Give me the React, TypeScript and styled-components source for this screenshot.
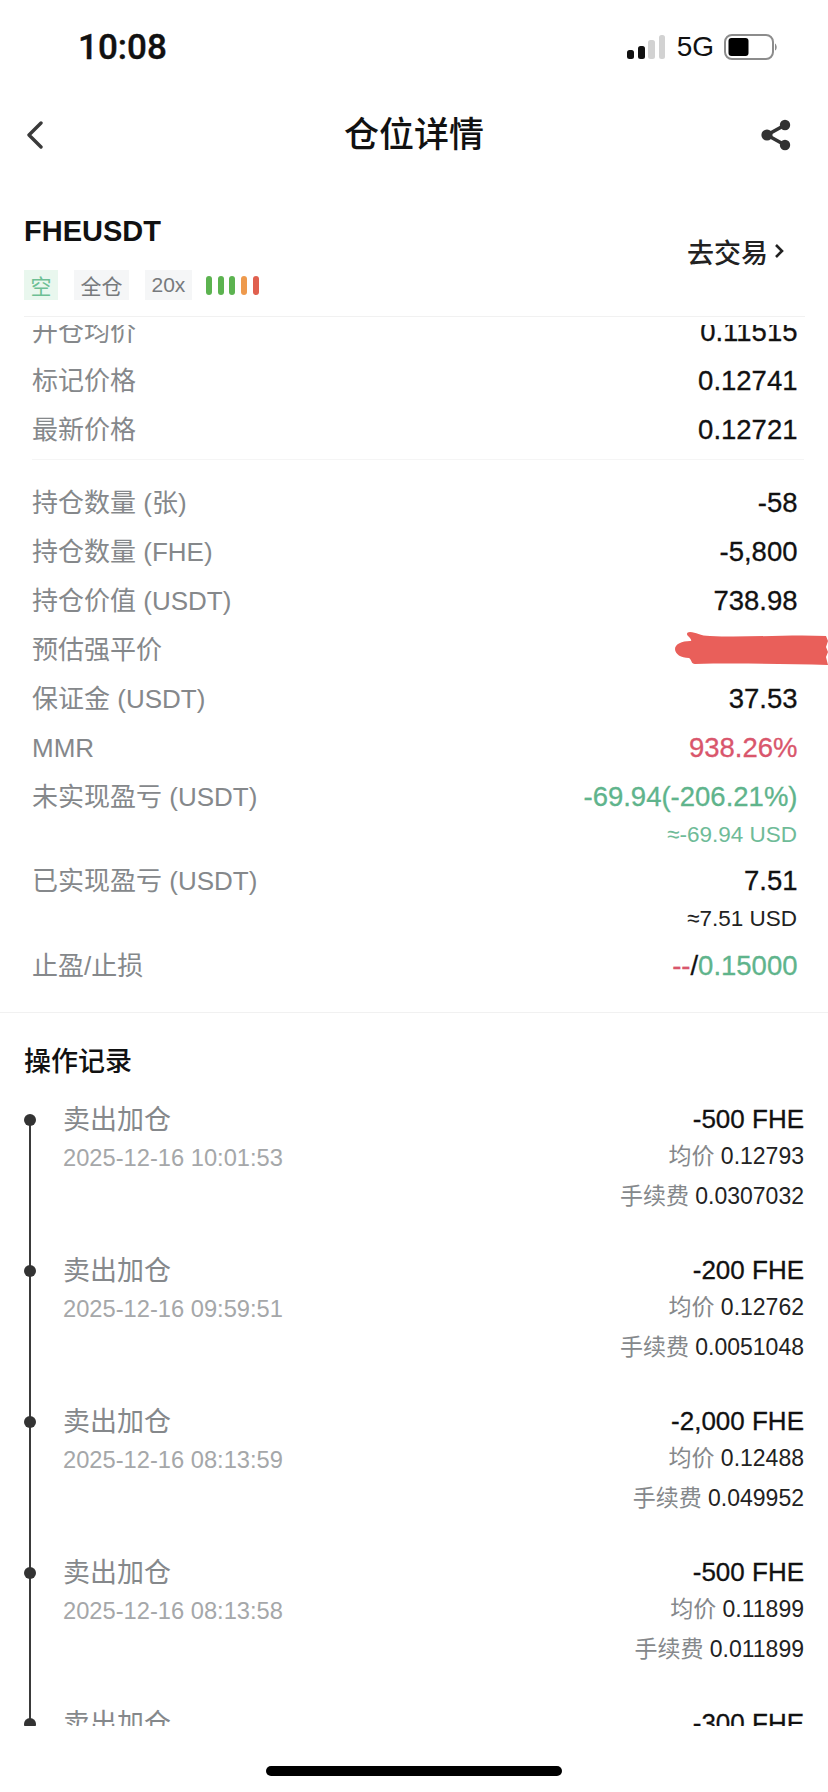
import styled, { createGlobalStyle } from 'styled-components';

const FONT = '"Liberation Sans", "Noto Sans CJK SC", sans-serif';

const GlobalStyle = createGlobalStyle`
    html, body {
        margin: 0;
        padding: 0;
        background: #fff;
    }
    * {
        box-sizing: border-box;
    }
`;

const priceRows = [
    { label: '开仓均价', value: '0.11515' },
    { label: '标记价格', value: '0.12741' },
    { label: '最新价格', value: '0.12721' },
];

const records = [
    { amount: '-500 FHE', time: '2025-12-16 10:01:53', price: '0.12793', fee: '0.0307032' },
    { amount: '-200 FHE', time: '2025-12-16 09:59:51', price: '0.12762', fee: '0.0051048' },
    { amount: '-2,000 FHE', time: '2025-12-16 08:13:59', price: '0.12488', fee: '0.049952' },
    { amount: '-500 FHE', time: '2025-12-16 08:13:58', price: '0.11899', fee: '0.011899' },
    { amount: '-300 FHE', time: '2025-12-16 08:13:58', price: '0.11899', fee: '0.007139' },
];

const riskColors = ['#5cb350', '#5cb350', '#5cb350', '#ee9a4d', '#e0604f'];

export default function App() {
    return (
        <Page>
            <GlobalStyle />
            <StatusBar>
                <Clock>10:08</Clock>
                <StatusIcons>
                    <svg width="38" height="24" viewBox="0 0 38 24">
                        <rect x="0" y="15" width="7" height="9" rx="2.5" fill="#111" />
                        <rect x="11" y="11" width="7" height="13" rx="2.5" fill="#111" />
                        <rect x="21" y="5" width="7" height="19" rx="2.5" fill="#d2d2d2" />
                        <rect x="32" y="0" width="6" height="24" rx="2.5" fill="#d2d2d2" />
                    </svg>
                    <Network>5G</Network>
                    <svg width="54" height="26" viewBox="0 0 54 26">
                        <rect x="1" y="1" width="48" height="24" rx="7" fill="none" stroke="#8c8c8c" strokeWidth="2" />
                        <rect x="4.5" y="4" width="20" height="18" rx="3" fill="#000" />
                        <path d="M51 9.5c2 1 2.5 6 0 7z" fill="#8c8c8c" />
                    </svg>
                </StatusIcons>
            </StatusBar>

            <NavBar>
                <svg width="18" height="28" viewBox="0 0 18 28">
                    <path d="M15 2 3 14l12 12" fill="none" stroke="#3a3a3a" strokeWidth="3.4" strokeLinecap="round" strokeLinejoin="round" />
                </svg>
                <NavTitle>仓位详情</NavTitle>
                <ShareIcon width="32" height="32" viewBox="0 0 32 32">
                    <path d="M25 6 7 16l18 10" fill="none" stroke="#333" strokeWidth="3.6" />
                    <circle cx="25" cy="6" r="5.2" fill="#333" />
                    <circle cx="7" cy="16" r="5.6" fill="#333" />
                    <circle cx="25" cy="26" r="5.2" fill="#333" />
                </ShareIcon>
            </NavBar>

            <SymbolHeader>
                <div>
                    <Symbol>FHEUSDT</Symbol>
                    <TagRow>
                        <Tag $green>空</Tag>
                        <Tag>全仓</Tag>
                        <Tag>20x</Tag>
                        <RiskBars>
                            {riskColors.map((c, i) => <RiskBar key={i} $color={c} />)}
                        </RiskBars>
                    </TagRow>
                </div>
                <TradeLink>
                    去交易
                    <svg width="11" height="18" viewBox="0 0 11 18">
                        <path d="M3 3l6 6-6 6" fill="none" stroke="#222" strokeWidth="2.6" />
                    </svg>
                </TradeLink>
            </SymbolHeader>

            <DetailClip>
                <PriceGroup>
                    {priceRows.map((r) => (
                        <Row key={r.label}>
                            <Label>{r.label}</Label>
                            <Value>{r.value}</Value>
                        </Row>
                    ))}
                </PriceGroup>

                <PositionGroup>
                    <Row><Label>持仓数量 (张)</Label><Value>-58</Value></Row>
                    <Row><Label>持仓数量 (FHE)</Label><Value>-5,800</Value></Row>
                    <Row><Label>持仓价值 (USDT)</Label><Value>738.98</Value></Row>
                    <Row>
                        <Label>预估强平价</Label>
                        <Scribble width="153" height="36" viewBox="0 0 153 36">
                            <path d="M15 1c6 0 10 4 20 4C70 7 115 3 151 5l2 5-2 6 2 5-2 5 2 8C110 33 60 32 20 33c-4 0-3-4-6-6C6 27 0 23 0 18s7-8 15-8c3 0 0-3-2-5S12 1 15 1z" fill="#e95f5a" />
                        </Scribble>
                    </Row>
                    <Row><Label>保证金 (USDT)</Label><Value>37.53</Value></Row>
                    <Row><Label>MMR</Label><Value $color="#d9566c">938.26%</Value></Row>
                    <Row><Label>未实现盈亏 (USDT)</Label><Value $color="#5fb48c">-69.94(-206.21%)</Value></Row>
                    <SubValue $color="#6fbb98">≈-69.94 USD</SubValue>
                    <Row><Label>已实现盈亏 (USDT)</Label><Value>7.51</Value></Row>
                    <SubValue $color="#222" $tall>≈7.51 USD</SubValue>
                    <Row>
                        <Label>止盈/止损</Label>
                        <Value><Colored $color="#d9566c">--</Colored>/<Colored $color="#5fb48c">0.15000</Colored></Value>
                    </Row>
                </PositionGroup>
            </DetailClip>

            <Records>
                <SectionTitle>操作记录</SectionTitle>
                <Timeline>
                    {records.map((r, i) => (
                        <TimelineItem key={i}>
                            <div>
                                <RecordTitle>卖出加仓</RecordTitle>
                                <RecordTime>{r.time}</RecordTime>
                            </div>
                            <RecordRight>
                                <Amount>{r.amount}</Amount>
                                <RecordMeta><MetaLabel>均价</MetaLabel> {r.price}</RecordMeta>
                                <RecordMeta><MetaLabel>手续费</MetaLabel> {r.fee}</RecordMeta>
                            </RecordRight>
                        </TimelineItem>
                    ))}
                </Timeline>
            </Records>

            <HomeBar />
        </Page>
    );
}

const Page = styled.div`
    width: 828px;
    height: 1792px;
    display: flex;
    flex-direction: column;
    overflow: hidden;
    background: #fff;
    color: #111;
    font-family: ${FONT};
`;

const StatusBar = styled.div`
    height: 94px;
    flex: none;
    display: flex;
    align-items: center;
    justify-content: space-between;
    padding: 0 50px 0 78px;
`;

const Clock = styled.div`
    font-family: Roboto, sans-serif;
    font-size: 35px;
    font-weight: 500;
    -webkit-text-stroke: 0.4px currentColor;
`;

const StatusIcons = styled.div`
    display: flex;
    align-items: center;
`;

const Network = styled.div`
    font-size: 28px;
    margin: 0 10px 0 12px;
`;

const NavBar = styled.div`
    height: 82px;
    flex: none;
    display: grid;
    grid-template-columns: 1fr auto 1fr;
    align-items: center;
    padding: 0 26px;
`;

const NavTitle = styled.div`
    font-size: 35px;
    line-height: 40px;
    font-weight: 500;
    color: #111;
`;

const ShareIcon = styled.svg`
    justify-self: end;
    margin-right: 10px;
`;

const SymbolHeader = styled.div`
    height: 141px;
    flex: none;
    margin: 0 23px 0 24px;
    padding-top: 37px;
    display: flex;
    justify-content: space-between;
    border-bottom: 1px solid #f1f1f1;
`;

const Symbol = styled.div`
    font-size: 29px;
    line-height: 36px;
    font-weight: 700;
`;

const TagRow = styled.div`
    display: flex;
    align-items: center;
    gap: 16px;
    margin-top: 21px;
`;

const Tag = styled.div<{ $green?: boolean }>`
    height: 30px;
    padding: 0 6.5px;
    display: flex;
    align-items: center;
    font-size: 21px;
    background: ${(p) => (p.$green ? '#e9f7ee' : '#f5f6f7')};
    color: ${(p) => (p.$green ? '#6dbf94' : '#777a7d')};
`;

const RiskBars = styled.div`
    display: flex;
    gap: 5.7px;
    margin-left: -2px;
`;

const RiskBar = styled.div<{ $color: string }>`
    width: 6px;
    height: 19px;
    border-radius: 3px;
    background: ${(p) => p.$color};
`;

const TradeLink = styled.div`
    display: flex;
    align-items: center;
    gap: 5px;
    height: 36px;
    margin: 20px 21px 0 0;
    font-size: 27px;
    font-weight: 500;
    color: #222;
`;

/* the list is scrolled: a small white gap under the header, then cut-off content */
const DetailClip = styled.div`
    height: 688px;
    flex: none;
    margin-top: 8px;
    overflow: hidden;
    border-bottom: 1px solid #f1f1f1;
`;

const PriceGroup = styled.div`
    margin: -19px 24px 0 32px;
    padding: 0 8px 6px 0;
    border-bottom: 1px solid #f5f5f5;
`;

const PositionGroup = styled.div`
    padding: 17px 32px 0;
`;

const Row = styled.div`
    position: relative;
    height: 49px;
    display: flex;
    align-items: center;
    justify-content: space-between;
`;

const Label = styled.div`
    font-size: 26px;
    line-height: 36px;
    padding-top: 2px;
    color: #85888b;
`;

const Value = styled.div<{ $color?: string }>`
    font-size: 27.5px;
    line-height: 36px;
    padding-top: 2px;
    margin-right: -1.5px;
    color: ${(p) => p.$color ?? '#111'};
    -webkit-text-stroke: 0.3px currentColor;
`;

const Colored = styled.span<{ $color: string }>`
    color: ${(p) => p.$color};
`;

const SubValue = styled.div<{ $color: string; $tall?: boolean }>`
    height: ${(p) => (p.$tall ? 36 : 35)}px;
    margin-right: -1px;
    line-height: 30px;
    text-align: right;
    font-size: 22.5px;
    color: ${(p) => p.$color};
`;

const Scribble = styled.svg`
    position: absolute;
    right: -32px;
    top: 7px;
`;

const Records = styled.div`
    flex: none;
    padding: 31px 24px 0;
`;

const SectionTitle = styled.div`
    height: 36px;
    line-height: 36px;
    font-size: 27px;
    font-weight: 500;
    color: #111;
`;

const Timeline = styled.div`
    height: 646px;
    padding-top: 22px;
    overflow: hidden;
`;

const TimelineItem = styled.div`
    position: relative;
    height: 151px;
    padding-left: 39px;
    display: flex;
    justify-content: space-between;

    /* rail segment */
    &::before {
        content: '';
        position: absolute;
        left: 5px;
        top: 18px;
        width: 2px;
        height: 151px;
        background: #3a3a3a;
    }

    /* dot */
    &::after {
        content: '';
        position: absolute;
        left: 0;
        top: 12px;
        width: 12px;
        height: 12px;
        border-radius: 50%;
        background: #333;
    }
`;

const RecordTitle = styled.div`
    height: 36px;
    line-height: 36px;
    font-size: 27px;
    color: #85888b;
`;

const RecordTime = styled.div`
    margin-top: 5px;
    line-height: 30px;
    font-size: 23.7px;
    color: #a5a7a9;
`;

const RecordRight = styled.div`
    display: flex;
    flex-direction: column;
    align-items: flex-end;
`;

const Amount = styled.div`
    height: 34px;
    line-height: 34px;
    font-size: 26px;
    color: #111;
    -webkit-text-stroke: 0.3px currentColor;
`;

const RecordMeta = styled.div`
    line-height: 40px;
    font-size: 23px;
    color: #222;
`;

const MetaLabel = styled.span`
    color: #85888b;
`;

const HomeBar = styled.div`
    width: 296px;
    height: 10px;
    flex: none;
    margin: auto auto 16px;
    border-radius: 5px;
    background: #000;
`;
